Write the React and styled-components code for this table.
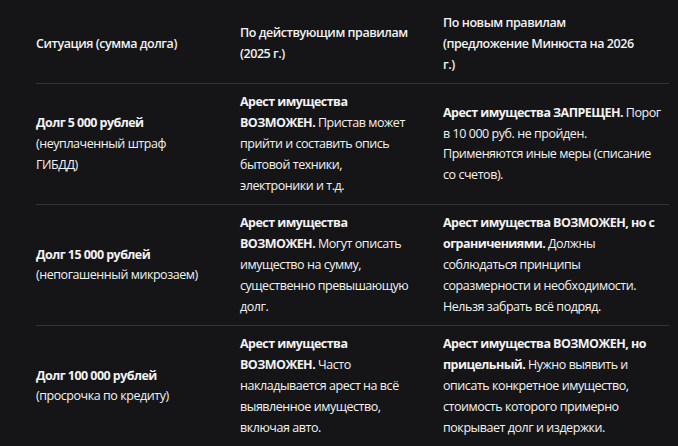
import React from 'react'
import styled, { createGlobalStyle } from 'styled-components'

const GlobalStyle = createGlobalStyle`
  html, body {
    margin: 0;
    padding: 0;
    background: #151517;
  }
  body {
    width: 678px;
    height: 446px;
    overflow: hidden;
    font-family: "Open Sans", "Noto Sans", sans-serif;
  }
`

const Wrapper = styled.div`
  padding: 5px 0 0 36px;
`

const Table = styled.table`
  width: 633px;
  border-collapse: collapse;
  table-layout: fixed;
  color: #f2f2f2;
  font-size: 12.5px;
  line-height: 20.8px;
  letter-spacing: -0.45px;
`

const Col = styled.col`
  width: ${p => p.w}px;
`

const Row = styled.tr`
  border-bottom: 1px solid ${p => (p.last ? 'transparent' : '#343436')};
`

const Head = styled.th`
  text-align: left;
  font-weight: 600;
  vertical-align: middle;
  padding: 8px 16px;
  &:first-child { padding-left: 0; }
  &:last-child { padding-right: 0; }
`

const Cell = styled.td`
  vertical-align: middle;
  padding: 8px 16px;
  font-weight: 400;
  &:first-child { padding-left: 0; }
  &:last-child { padding-right: 0; }
`

const B = styled.strong`
  font-weight: 700;
  letter-spacing: -0.55px;
`

const rows = [
  {
    debt: 'Долг 5 000 рублей',
    note: '(неуплаченный штраф ГИБДД)',
    nowB: 'Арест имущества ВОЗМОЖЕН.',
    now: ' Пристав может прийти и составить опись бытовой техники, электроники и т.д.',
    newB: 'Арест имущества ЗАПРЕЩЕН.',
    next: ' Порог в 10 000 руб. не пройден. Применяются иные меры (списание со\u00a0счетов).',
  },
  {
    debt: 'Долг 15 000 рублей',
    note: '(непогашенный микрозаем)',
    nowB: 'Арест имущества ВОЗМОЖЕН.',
    now: ' Могут описать имущество на сумму, существенно превышающую долг.',
    newB: 'Арест имущества ВОЗМОЖЕН, но с ограничениями.',
    next: ' Должны соблюдаться принципы соразмерности и необходимости. Нельзя забрать всё подряд.',
  },
  {
    debt: 'Долг 100 000 рублей',
    note: '(просрочка по кредиту)',
    nowB: 'Арест имущества ВОЗМОЖЕН.',
    now: ' Часто накладывается арест на всё выявленное имущество, включая авто.',
    newB: 'Арест имущества ВОЗМОЖЕН, но прицельный.',
    next: ' Нужно выявить и описать конкретное имущество, стоимость которого примерно покрывает долг и издержки.',
  },
]

const App = () => {
  return (
    <Wrapper>
      <GlobalStyle />
      <Table>
        <colgroup>
          <Col w={188} />
          <Col w={203} />
          <Col w={242} />
        </colgroup>
        <thead>
          <Row>
            <Head>Ситуация (сумма долга)</Head>
            <Head>По действующим правилам (2025 г.)</Head>
            <Head>
              По новым правилам
              <br />
              (предложение Минюста на 2026
              <br />
              г.)
            </Head>
          </Row>
        </thead>
        <tbody>
          {rows.map((r, i) => (
            <Row key={i} last={i === rows.length - 1}>
              <Cell>
                <B>{r.debt}</B>
                <br />
                {r.note}
              </Cell>
              <Cell>
                <B>{r.nowB}</B>
                {r.now}
              </Cell>
              <Cell>
                <B>{r.newB}</B>
                {r.next}
              </Cell>
            </Row>
          ))}
        </tbody>
      </Table>
    </Wrapper>
  )
}

export default App
